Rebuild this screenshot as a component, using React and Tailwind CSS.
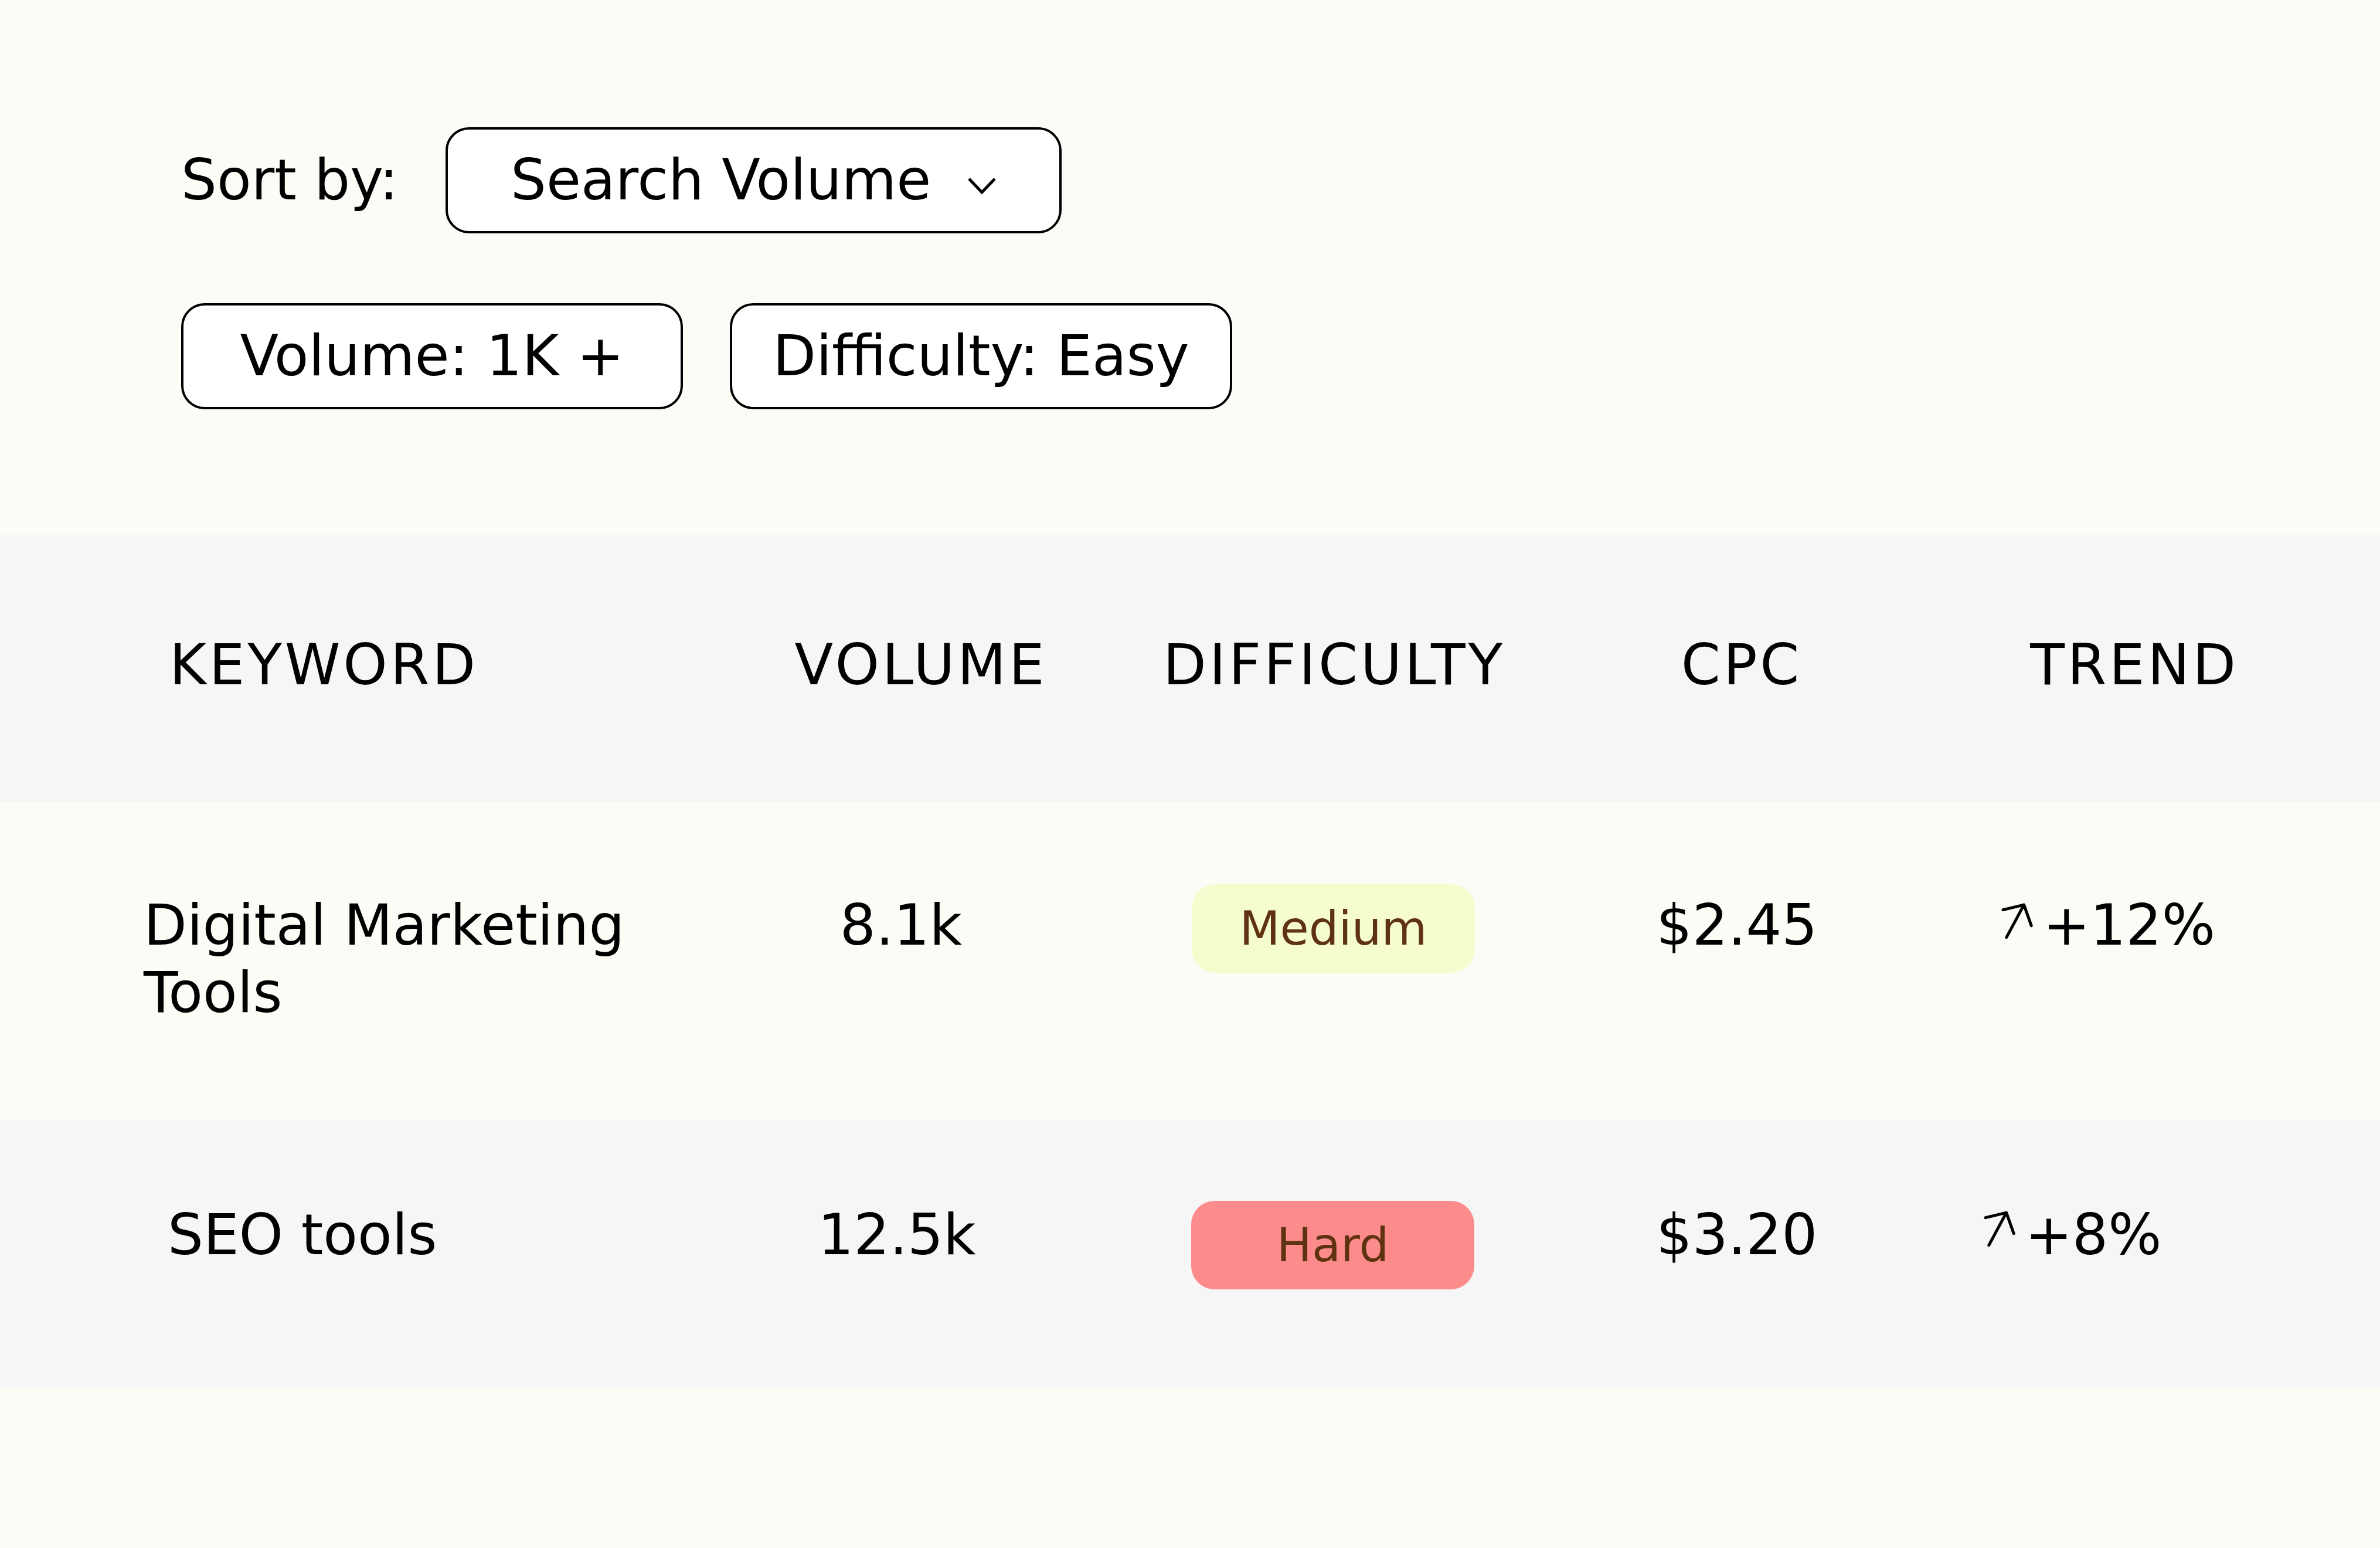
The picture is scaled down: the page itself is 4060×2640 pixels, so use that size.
import React from "react";

// keyword table with sort + filter controls

function Chevron() {
  return (
    <svg width="50" height="32" viewBox="0 0 50 32" fill="none" className="ml-[62px] mt-[18px] shrink-0">
      <path d="M3 4 25 27 47 4" stroke="#000" strokeWidth="5" />
    </svg>
  );
}

function TrendArrow({ className }) {
  return (
    <svg width="56" height="66" viewBox="0 0 56 66" fill="none" className={className}>
      <path
        d="M9.8 60.6 39.6 5.1M4 13.6 39.6 5.1 52.2 40.7"
        stroke="#000"
        strokeWidth="5"
        strokeLinecap="round"
        strokeLinejoin="round"
      />
    </svg>
  );
}

export default function App() {
  return (
    <div className="min-h-screen bg-[#fcfcf7] font-['DejaVu_Sans',sans-serif] text-[96px] leading-[115px] text-black">
      {/* Sort + filters */}
      <div className="pl-[309px] pt-[217px]">
        <div className="flex items-center">
          <span className="w-[451px] shrink-0">Sort by:</span>
          <button className="flex h-[181px] w-[1051px] items-center rounded-[40px] border-4 border-black bg-white pl-[107px]">
            <span>Search Volume</span>
            <Chevron />
          </button>
        </div>
        <div className="mt-[119px] flex gap-[80px]">
          <button className="flex h-[181px] w-[856px] items-center justify-center rounded-[40px] border-4 border-black bg-white">
            Volume: 1K +
          </button>
          <button className="flex h-[181px] w-[857px] items-center justify-center rounded-[40px] border-4 border-black bg-white">
            Difficulty: Easy
          </button>
        </div>
      </div>

      {/* Table */}
      <div className="mt-[214px]">
        {/* Header */}
        <div className="flex h-[456px] items-start bg-[#f6f6f7] pt-[165px] tracking-wider">
          <div className="w-[1321px] shrink-0 pl-[289px]">KEYWORD</div>
          <div className="w-[500px] shrink-0 text-center">VOLUME</div>
          <div className="ml-[145px] w-[620px] shrink-0 text-center">DIFFICULTY</div>
          <div className="ml-[185px] w-[400px] shrink-0 text-center">CPC</div>
          <div className="ml-[270px] w-[400px] shrink-0 text-center">TREND</div>
        </div>

        {/* Row 1 */}
        <div className="flex h-[543px] items-start">
          <div className="w-[1321px] shrink-0 pl-[245px] pt-[153px]">
            <div className="w-[1000px]">Digital Marketing Tools</div>
          </div>
          <div className="ml-[16px] w-[400px] shrink-0 pt-[153px] text-center">8.1k</div>
          <div className="ml-[296px] mt-[140px] flex h-[151px] w-[483px] shrink-0 items-center justify-center rounded-[40px] bg-[#f5fccd] text-[80px] leading-none text-[#5f3311]">
            Medium
          </div>
          <div className="ml-[247px] w-[400px] shrink-0 pt-[153px] text-center">$2.45</div>
          <div className="ml-[233px] flex w-[400px] shrink-0 items-start justify-center gap-[16px] pt-[153px]">
            <TrendArrow className="mt-[17px] shrink-0" />
            <span>+12%</span>
          </div>
        </div>

        {/* Row 2 */}
        <div className="flex h-[457px] items-start bg-[#f6f6f7]">
          <div className="w-[1321px] shrink-0 pl-[286px] pt-[138px]">SEO tools</div>
          <div className="ml-[9px] w-[400px] shrink-0 pt-[138px] text-center">12.5k</div>
          <div className="ml-[302px] mt-[137px] flex h-[151px] w-[483px] shrink-0 items-center justify-center rounded-[40px] bg-[#fc8c8b] text-[80px] leading-none text-[#5f3311]">
            Hard
          </div>
          <div className="ml-[248px] w-[400px] shrink-0 pt-[138px] text-center">$3.20</div>
          <div className="ml-[172px] flex w-[400px] shrink-0 items-start justify-center gap-[16px] pt-[138px]">
            <TrendArrow className="mt-[14px] shrink-0" />
            <span>+8%</span>
          </div>
        </div>
      </div>
    </div>
  );
}
